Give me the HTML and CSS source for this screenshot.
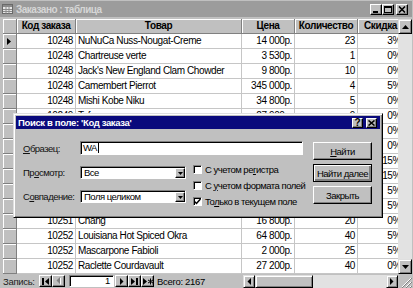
FILE: index.html
```html
<!DOCTYPE html>
<html>
<head>
  <title>Заказано : таблица</title>
  <link rel="stylesheet" href="styles.css">
</head>
<body>
  <div class="window">
    <div class="titlebar">
      <svg class="app-icon" width="11" height="10" viewBox="0 0 11 10">
        <rect x="0.5" y="0.5" width="10" height="9" fill="#e8e8e8" stroke="#6a6a6a"/>
        <rect x="1" y="1" width="9" height="2" fill="#8a8a8a"/>
        <path d="M1 5.5H10M1 7.5H10M4 3V9.5M7 3V9.5" stroke="#8a8a8a" stroke-width="1"/>
      </svg>
      <span class="title">Заказано : таблица</span>
      <div class="ctrls">
        <span class="cbtn"><svg width="8" height="7"><rect x="1" y="5" width="5" height="2" fill="#000"/></svg></span>
        <span class="cbtn"><svg width="8" height="7"><rect x="0.5" y="0.5" width="7" height="6" fill="none" stroke="#000"/><rect x="0" y="0" width="8" height="2" fill="#000"/></svg></span>
        <span class="cbtn close-btn"><svg width="8" height="7"><path d="M1 0.5L7 6.5M7 0.5L1 6.5" stroke="#000" stroke-width="1.6"/></svg></span>
      </div>
    </div>

    <div class="main">
      <div class="sheet">
        <div class="row head"><span></span><span>Код заказа</span><span>Товар</span><span>Цена</span><span>Количество</span><span>Скидка</span></div>
        <div class="row"><span class="sel"><svg width="4" height="7"><polygon points="0,0 4,3.5 0,7" fill="#000"/></svg></span><span class="num">10248</span><span>NuNuCa Nuss-Nougat-Creme</span><span class="num">14 000р.</span><span class="num">23</span><span class="num">3%</span></div>
        <div class="row"><span class="sel"></span><span class="num">10248</span><span>Chartreuse verte</span><span class="num">3 530р.</span><span class="num">1</span><span class="num">0%</span></div>
        <div class="row"><span class="sel"></span><span class="num">10248</span><span>Jack's New England Clam Chowder</span><span class="num">9 800р.</span><span class="num">10</span><span class="num">0%</span></div>
        <div class="row"><span class="sel"></span><span class="num">10248</span><span>Camembert Pierrot</span><span class="num">345 000р.</span><span class="num">4</span><span class="num">5%</span></div>
        <div class="row"><span class="sel"></span><span class="num">10248</span><span>Mishi Kobe Niku</span><span class="num">34 800р.</span><span class="num">5</span><span class="num">0%</span></div>
        <div class="row"><span class="sel"></span><span class="num">10249</span><span>Tofu</span><span class="num">27 900р.</span><span class="num">9</span><span class="num">0%</span></div>
        <div class="row"><span class="sel"></span><span class="num">10249</span><span>Manjimup Dried Apples</span><span class="num">127 200р.</span><span class="num">40</span><span class="num">0%</span></div>
        <div class="row"><span class="sel"></span><span class="num">10250</span><span>Jack's New England Clam Chowder</span><span class="num">11 550р.</span><span class="num">10</span><span class="num">0%</span></div>
        <div class="row"><span class="sel"></span><span class="num">10250</span><span>Manjimup Dried Apples</span><span class="num">127 200р.</span><span class="num">35</span><span class="num">15%</span></div>
        <div class="row"><span class="sel"></span><span class="num">10250</span><span>Louisiana Fiery Hot Pepper Sauce</span><span class="num">50 400р.</span><span class="num">15</span><span class="num">15%</span></div>
        <div class="row"><span class="sel"></span><span class="num">10251</span><span>Gustaf's Knäckebröd</span><span class="num">50 400р.</span><span class="num">6</span><span class="num">5%</span></div>
        <div class="row"><span class="sel"></span><span class="num">10251</span><span>Ravioli Angelo</span><span class="num">46 800р.</span><span class="num">15</span><span class="num">5%</span></div>
        <div class="row"><span class="sel"></span><span class="num">10251</span><span>Chang</span><span class="num">16 800р.</span><span class="num">20</span><span class="num">0%</span></div>
        <div class="row"><span class="sel"></span><span class="num">10252</span><span>Louisiana Hot Spiced Okra</span><span class="num">64 800р.</span><span class="num">40</span><span class="num">5%</span></div>
        <div class="row"><span class="sel"></span><span class="num">10252</span><span>Mascarpone Fabioli</span><span class="num">2 000р.</span><span class="num">25</span><span class="num">5%</span></div>
        <div class="row"><span class="sel"></span><span class="num">10252</span><span>Raclette Courdavault</span><span class="num">27 200р.</span><span class="num">40</span><span class="num">0%</span></div>
      </div>
      <div class="vscroll">
        <span class="arrow"><svg width="7" height="4"><polygon points="0,4 3.5,0 7,4" fill="#000"/></svg></span>
        <div class="track"></div>
        <span class="arrow"><svg width="7" height="4"><polygon points="0,0 3.5,4 7,0" fill="#000"/></svg></span>
      </div>
    </div>

    <div class="statusbar">
      <div class="nav">
        <span class="rec-label">Запись:</span>
        <span class="nbtn"><svg width="8" height="7"><rect x="0" y="0" width="2" height="7" fill="#000"/><polygon points="7,0 7,7 3,3.5" fill="#000"/></svg></span>
        <span class="nbtn"><svg width="5" height="8"><polygon points="4,0 4,7 0.5,3.5" fill="#808080"/><polygon points="5,1 5,8 4,7 4,1" fill="#fff"/></svg></span>
        <span class="rec-input">1</span>
        <span class="nbtn"><svg width="5" height="7"><polygon points="1,0 1,7 4.5,3.5" fill="#000"/></svg></span>
        <span class="nbtn"><svg width="8" height="7"><polygon points="0,0 0,7 4,3.5" fill="#000"/><rect x="5" y="0" width="2" height="7" fill="#000"/></svg></span>
        <span class="nbtn"><svg width="10" height="7"><polygon points="0,0 0,7 4,3.5" fill="#000"/><path d="M7.5 0.5V6.5M5 2L10 5M10 2L5 5" stroke="#000" stroke-width="1"/></svg></span>
        <span class="rec-total">Всего: 2167</span>
      </div>
      <div class="hscroll">
        <span class="arrow"><svg width="4" height="7"><polygon points="4,0 4,7 0.5,3.5" fill="#000"/></svg></span>
        <span class="thumb"></span>
        <span class="htrack"></span>
        <span class="arrow"><svg width="4" height="7"><polygon points="0,0 0,7 3.5,3.5" fill="#000"/></svg></span>
      </div>
      <div class="grip">
        <svg width="12" height="12"><path d="M11 2L2 11M11 6L6 11M11 10L10 11" stroke="#fff" stroke-width="1"/><path d="M12 2L2 12M12 6L6 12M12 10L10 12" stroke="#808080" stroke-width="1"/></svg>
      </div>
    </div>

    <div class="dialog">
      <div class="dlg-title">
        <span>Поиск в поле: 'Код заказа'</span>
        <div class="dlg-ctrls">
          <span class="cbtn help">?</span>
          <span class="cbtn"><svg width="7" height="6"><path d="M0.5 0.5L6.5 5.5M6.5 0.5L0.5 5.5" stroke="#000" stroke-width="1.6"/></svg></span>
        </div>
      </div>
      <div class="dlg-body">
        <div class="form">
          <div class="field-row">
            <label class="lbl"><u>О</u>бразец:</label>
            <div class="textbox"><span>WA</span><span class="caret"></span></div>
          </div>
          <div class="lower">
            <div class="combos">
              <label class="lbl">Пр<u>о</u>смотр:</label>
              <div class="combo"><span class="combo-text">Все</span><span class="drop"><svg width="5" height="3"><polygon points="0,0 5,0 2.5,3" fill="#000"/></svg></span></div>
              <label class="lbl">С<u>о</u>впадение:</label>
              <div class="combo"><span class="combo-text">Поля целиком</span><span class="drop"><svg width="5" height="3"><polygon points="0,0 5,0 2.5,3" fill="#000"/></svg></span></div>
            </div>
            <div class="checks">
              <div class="check"><span class="box"></span><span>С учетом ре<u>г</u>истра</span></div>
              <div class="check"><span class="box"></span><span>С <u>у</u>четом формата полей</span></div>
              <div class="check"><span class="box"><svg width="7" height="7"><path d="M0.5 3.5L2.5 5.5L6.5 1" fill="none" stroke="#000" stroke-width="1.5"/></svg></span><span>То<u>л</u>ько в текущем поле</span></div>
            </div>
          </div>
        </div>
        <div class="buttons">
          <span class="btn"><span><u>Н</u>айти</span></span>
          <span class="btn default"><span>Найти <u>д</u>алее</span></span>
          <span class="btn"><span>Закрыть</span></span>
        </div>
      </div>
    </div>
  </div>
</body>
</html>
```

FILE: styles.css
```css
/* Access datasheet with the find dialog */

* {
  box-sizing: border-box;
}

body {
  margin: 0;
  background: #c0c0c0;
  font-family: "Liberation Sans", Arial, sans-serif;
  font-size: 10px;
  letter-spacing: -0.4px;
  color: #000;
}

u {
  text-decoration: underline;
}

.window {
  position: relative;
  width: 413px;
  height: 288px;
  padding-top: 1px;
  background: #c0c0c0;
  display: flex;
  flex-direction: column;
  overflow: hidden;
}

/* title bar */

.titlebar {
  height: 16px;
  margin: 0 1px 2px 0;
  padding: 0 4px 0 2px;
  background: #9c9c9c;
  color: #d6d6d6;
  font-weight: bold;
  letter-spacing: -0.5px;
  display: flex;
  align-items: center;
}

.app-icon {
  margin-right: 3px;
}

.title {
  flex: 1;
}

.ctrls,
.dlg-ctrls {
  display: flex;
  align-items: center;
}

.cbtn {
  width: 12px;
  height: 11px;
  background: #c0c0c0;
  border: 1px solid;
  border-color: #fff #000 #000 #fff;
  box-shadow: inset -1px -1px #808080;
  display: flex;
  align-items: center;
  justify-content: center;
}

.close-btn {
  margin-left: 2px;
}

/* datasheet */

.main {
  height: 255px;
  padding-left: 3px;
  margin-right: 1px;
  display: flex;
}

.sheet {
  flex: 1;
  overflow: hidden;
  background: #fff;
}

.row {
  display: grid;
  grid-template-columns: 14px 59px 166px 53px 63px 46px;
  height: 15px;
}

.row > span {
  padding: 0 2px;
  line-height: 14px;
  white-space: nowrap;
  overflow: hidden;
  border-right: 1px solid #c6c6c6;
  border-bottom: 1px solid #c6c6c6;
}

.row .num {
  text-align: right;
}

.row .sel {
  background: #c0c0c0;
  border-right-color: #808080;
  border-bottom-color: #808080;
  box-shadow: inset 1px 1px #fff;
  display: flex;
  align-items: center;
  padding-left: 4px;
}

.head > span {
  background: #c0c0c0;
  font-weight: bold;
  text-align: center;
  border-right-color: #808080;
  border-bottom-color: #808080;
  box-shadow: inset 1px 1px #fff;
}

.vscroll {
  width: 14px;
  display: flex;
  flex-direction: column;
}

.vscroll .arrow {
  height: 15px;
}

.arrow {
  background: #c0c0c0;
  border: 1px solid;
  border-color: #dfdfdf #000 #000 #dfdfdf;
  box-shadow: inset 1px 1px #fff, inset -1px -1px #808080;
  display: flex;
  align-items: center;
  justify-content: center;
}

.track {
  flex: 1;
  background: #e2e2e2;
}

/* record navigation and horizontal scroll */

.statusbar {
  height: 14px;
  padding-left: 3px;
  margin-right: 1px;
  display: flex;
  align-items: center;
  font-size: 9.5px;
  letter-spacing: -0.3px;
}

.nav {
  width: 240px;
  display: flex;
  align-items: center;
}

.rec-label {
  width: 36px;
  color: #222;
}

.nbtn {
  width: 13px;
  height: 12px;
  background: #c0c0c0;
  border: 1px solid;
  border-color: #fff #000 #000 #fff;
  box-shadow: inset -1px -1px #808080;
  display: flex;
  align-items: center;
  justify-content: center;
}

.rec-input {
  width: 45px;
  height: 12px;
  margin: 0 1px 0 4px;
  padding-right: 3px;
  background: #fff;
  border: 1px solid;
  border-color: #808080 #fff #fff #808080;
  box-shadow: inset 1px 1px #000;
  text-align: right;
  line-height: 10px;
}

.rec-total {
  margin-left: 3px;
}

.hscroll {
  width: 155px;
  height: 13px;
  display: flex;
}

.hscroll .arrow {
  width: 12px;
}

.thumb {
  width: 58px;
  background: #c0c0c0;
  border: 1px solid;
  border-color: #dfdfdf #000 #000 #dfdfdf;
  box-shadow: inset 1px 1px #fff, inset -1px -1px #808080;
}

.htrack {
  flex: 1;
  background: #e2e2e2;
}

.grip {
  width: 14px;
  height: 14px;
  display: flex;
  align-items: flex-end;
  justify-content: flex-end;
}

/* find dialog */

.dialog {
  position: absolute;
  left: 13px;
  top: 113px;
  width: 370px;
  height: 105px;
  padding: 2px;
  background: #c0c0c0;
  border: 1px solid;
  border-color: #dfdfdf #000 #000 #dfdfdf;
  box-shadow: inset 1px 1px #fff, inset -1px -1px #808080;
  font-size: 9.5px;
  letter-spacing: -0.5px;
}

.dlg-title {
  height: 13px;
  padding: 0 3px 0 2px;
  background: #0a0a7c;
  color: #fff;
  font-weight: bold;
  letter-spacing: -0.35px;
  display: flex;
  align-items: center;
  justify-content: space-between;
}

.dlg-ctrls .cbtn {
  width: 11px;
  height: 10px;
  margin-left: 3px;
}

.help {
  color: #000;
  font-size: 10px;
  font-weight: bold;
  line-height: 8px;
}

.dlg-body {
  display: flex;
  padding: 12px 0 0 7px;
}

.form {
  width: 280px;
}

.field-row {
  display: flex;
  align-items: center;
}

.lbl {
  width: 57px;
  color: #111;
}

.textbox {
  width: 223px;
  height: 14px;
  padding-left: 2px;
  background: #fff;
  border: 1px solid;
  border-color: #808080 #fff #fff #808080;
  box-shadow: inset 1px 1px #000;
  line-height: 12px;
  display: flex;
  align-items: center;
}

.caret {
  width: 1px;
  height: 10px;
  margin-left: 1px;
  background: #000;
}

.lower {
  display: flex;
  margin-top: 6px;
}

.combos {
  display: grid;
  grid-template-columns: 57px 106px;
  grid-auto-rows: 13px;
  row-gap: 11px;
  align-items: center;
  padding-top: 5px;
}

.combo {
  height: 13px;
  background: #fff;
  border: 1px solid;
  border-color: #808080 #fff #fff #808080;
  box-shadow: inset 1px 1px #000;
  display: flex;
}

.combo-text {
  flex: 1;
  padding: 1px 0 0 3px;
  line-height: 10px;
}

.drop {
  width: 10px;
  margin: 1px 0 0;
  background: #c0c0c0;
  border: 1px solid;
  border-color: #fff #000 #000 #fff;
  box-shadow: inset -1px -1px #808080;
  display: flex;
  align-items: center;
  justify-content: center;
}

.checks {
  margin-left: 7px;
  display: flex;
  flex-direction: column;
}

.check {
  height: 16px;
  display: flex;
  align-items: center;
  white-space: nowrap;
}

.box {
  width: 9px;
  height: 9px;
  margin-right: 3px;
  background: #fff;
  border: 1px solid;
  border-color: #808080 #fff #fff #808080;
  box-shadow: inset 1px 1px #000;
  display: flex;
  align-items: center;
  justify-content: center;
}

.buttons {
  width: 59px;
  margin: 1px 0 0 10px;
  display: flex;
  flex-direction: column;
  gap: 4px;
}

.btn {
  height: 18px;
  background: #c0c0c0;
  border: 1px solid;
  border-color: #fff #000 #000 #fff;
  box-shadow: inset -1px -1px #808080;
  display: flex;
  align-items: center;
  justify-content: center;
  white-space: nowrap;
}

.btn.default {
  border: 1px solid #000;
  box-shadow: inset 1px 1px #fff, inset -2px -2px #808080;
}
```
